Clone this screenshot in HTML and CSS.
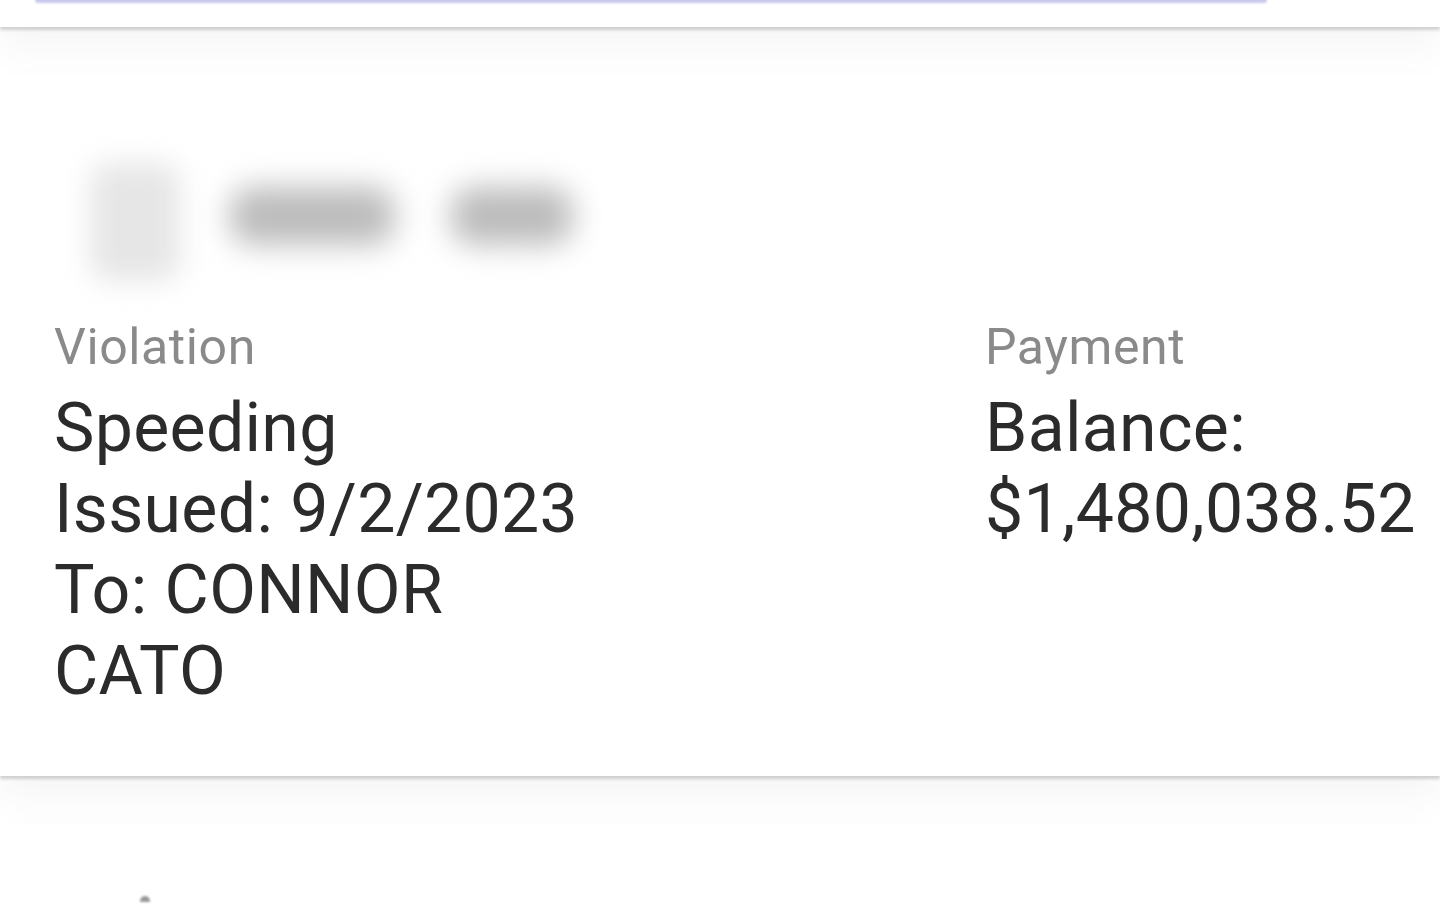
FILE: index.html
```html
<!DOCTYPE html>
<html lang="en">
<head>
<meta charset="utf-8">
<title>Citation</title>
<link rel="stylesheet" href="styles.css">
</head>
<body>
<div class="list">
  <section class="card card-prev">
    <div class="input-edge"></div>
  </section>

  <section class="card card-main">
    <div class="head">
      <div class="blur-icon"></div>
      <div class="blur-text blur-a"></div>
      <div class="blur-text blur-b"></div>
    </div>
    <div class="details">
      <div class="col col-left">
        <div class="label">Violation</div>
        <div class="value">Speeding</div>
        <div class="value">Issued: 9/2/2023</div>
        <div class="value">To: CONNOR CATO</div>
      </div>
      <div class="col col-right">
        <div class="label">Payment</div>
        <div class="value">Balance:</div>
        <div class="value">$1,480,038.52</div>
      </div>
    </div>
  </section>

  <section class="card card-next">
    <div class="next-mark"></div>
  </section>
</div>
</body>
</html>
```

FILE: styles.css
```css
html, body {
  margin: 0;
  padding: 0;
  background: #ffffff;
}
body {
  width: 1440px;
  height: 908px;
  overflow: hidden;
  font-family: Roboto, "Liberation Sans", Arial, sans-serif;
}
.list {
  display: flex;
  flex-direction: column;
  gap: 48px;
  margin-top: -20px;
}
.card {
  background: #ffffff;
  box-shadow: 0 3px 3px rgba(0, 0, 0, 0.17), 0 20px 40px rgba(0, 0, 0, 0.045);
}
.card-prev {
  height: 47px;
  padding: 0 173px 0 35px;
  display: flex;
  flex-direction: column;
}
.input-edge {
  margin-top: 18px;
  height: 5px;
  background: #c9c9ee;
  border-radius: 0 0 3px 3px;
  filter: blur(1px);
}
.card-main {
  height: 701px;
  padding: 0 0 0 54px;
  display: flex;
  flex-direction: column;
}
.head {
  display: flex;
  align-items: center;
  height: 160px;
  margin-top: 67px;
  padding-left: 36px;
  gap: 50px;
}
.blur-icon {
  width: 90px;
  height: 118px;
  background: #e6e6e6;
  border-radius: 20px;
  filter: blur(14px);
}
.blur-text {
  height: 58px;
  background: #bcbcbc;
  border-radius: 22px;
  filter: blur(15px);
}
.blur-a { width: 165px; margin-top: -12px; }
.blur-b { width: 122px; margin-left: 6px; margin-top: -12px; }
.details {
  display: grid;
  grid-template-columns: 931px 1fr;
  margin-top: 15px;
}
.col {
  display: flex;
  flex-direction: column;
  filter: blur(0.7px);
}
.col-left { width: 560px; }
.label {
  font-size: 50px;
  line-height: 60px;
  color: #8a8a8a;
  letter-spacing: 0.6px;
  margin-bottom: 11px;
}
.value {
  font-size: 68px;
  line-height: 81px;
  color: #2b2b2b;
  letter-spacing: 0.3px;
}
.card-next {
  height: 120px;
  padding-left: 140px;
}
.next-mark {
  margin-top: 72px;
  width: 10px;
  height: 6px;
  border-radius: 5px 5px 0 0;
  background: #9a9a9a;
  filter: blur(1px);
}
```
